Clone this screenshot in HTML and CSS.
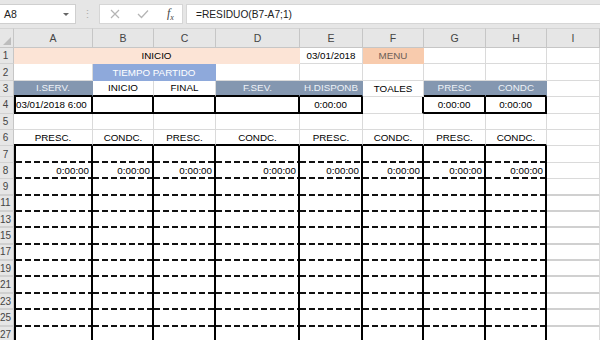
FILE: index.html
```html
<!DOCTYPE html>
<html>
<head>
<link rel="stylesheet" href="styles.css">
</head>
<body>

<div class="toolbar">
    <div class="namebox"><span>A8</span><span class="arrow"></span></div>
    <div class="grip">&#8942;</div>
    <div class="fxbox">
        <svg class="ico" width="10" height="10" viewBox="0 0 10 10"><path d="M1 1 L9 9 M9 1 L1 9" stroke="#b5b5b5" stroke-width="1.2" fill="none"/></svg>
        <svg class="ico" width="12" height="10" viewBox="0 0 12 10"><path d="M1 5 L4.5 8.5 L11 1.5" stroke="#b5b5b5" stroke-width="1.3" fill="none"/></svg>
        <span class="fx">f<sub>x</sub></span>
    </div>
    <div class="formula">=RESIDUO(B7-A7;1)</div>
</div>

<div class="sheet">
    <div class="corner"><span class="tri"></span></div>
    <div class="ch">A</div><div class="ch">B</div><div class="ch">C</div><div class="ch">D</div><div class="ch">E</div><div class="ch">F</div><div class="ch">G</div><div class="ch">H</div><div class="ch">I</div>

    <div class="rh">1</div>
    <div class="c ctr peach span4">INICIO</div>
    <div class="c ctr">03/01/2018</div>
    <div class="c ctr menu">MENU</div>
    <div class="c"></div><div class="c"></div><div class="c"></div>

    <div class="rh">2</div>
    <div class="c"></div>
    <div class="c ctr blue span2">TIEMPO PARTIDO</div>
    <div class="c"></div><div class="c"></div><div class="c"></div><div class="c"></div><div class="c"></div><div class="c"></div>

    <div class="rh">3</div>
    <div class="c ctr slate bb">I.SERV.</div>
    <div class="c ctr bb">INICIO</div>
    <div class="c ctr bb">FINAL</div>
    <div class="c ctr slate bb">F.SEV.</div>
    <div class="c ctr slate bb">H.DISPONB</div>
    <div class="c ctr">TOALES</div>
    <div class="c ctr slate bb">PRESC</div>
    <div class="c ctr slate bb">CONDC</div>
    <div class="c"></div>

    <div class="rh">4</div>
    <div class="c box first">03/01/2018 6:00</div>
    <div class="c box"></div>
    <div class="c box"></div>
    <div class="c box"></div>
    <div class="c box ctr">0:00:00</div>
    <div class="c br"></div>
    <div class="c box ctr">0:00:00</div>
    <div class="c box ctr">0:00:00</div>
    <div class="c"></div>

    <div class="rh">5</div>
    <div class="c"></div><div class="c"></div><div class="c"></div><div class="c"></div><div class="c"></div><div class="c"></div><div class="c"></div><div class="c"></div><div class="c"></div>

    <div class="rh">6</div>
    <div class="c ctr bb">PRESC.</div>
    <div class="c ctr bb">CONDC.</div>
    <div class="c ctr bb">PRESC.</div>
    <div class="c ctr bb">CONDC.</div>
    <div class="c ctr bb">PRESC.</div>
    <div class="c ctr bb">CONDC.</div>
    <div class="c ctr bb">PRESC.</div>
    <div class="c ctr bb">CONDC.</div>
    <div class="c"></div>

    <div class="rh">7</div>
    <div class="t first"></div><div class="t"></div><div class="t"></div><div class="t"></div><div class="t"></div><div class="t"></div><div class="t"></div><div class="t"></div>
    <div class="c"></div>

    <div class="rh">8</div>
    <div class="t first rt">0:00:00</div>
    <div class="t rt">0:00:00</div>
    <div class="t rt">0:00:00</div>
    <div class="t rt">0:00:00</div>
    <div class="t rt">0:00:00</div>
    <div class="t rt">0:00:00</div>
    <div class="t rt">0:00:00</div>
    <div class="t rt">0:00:00</div>
    <div class="c"></div>

    <div class="rh hid">9</div>
    <div class="t first"></div><div class="t"></div><div class="t"></div><div class="t"></div><div class="t"></div><div class="t"></div><div class="t"></div><div class="t"></div>
    <div class="c hid"></div>

    <div class="rh hid">11</div>
    <div class="t first"></div><div class="t"></div><div class="t"></div><div class="t"></div><div class="t"></div><div class="t"></div><div class="t"></div><div class="t"></div>
    <div class="c hid"></div>

    <div class="rh hid">13</div>
    <div class="t first"></div><div class="t"></div><div class="t"></div><div class="t"></div><div class="t"></div><div class="t"></div><div class="t"></div><div class="t"></div>
    <div class="c hid"></div>

    <div class="rh hid">15</div>
    <div class="t first"></div><div class="t"></div><div class="t"></div><div class="t"></div><div class="t"></div><div class="t"></div><div class="t"></div><div class="t"></div>
    <div class="c hid"></div>

    <div class="rh hid">17</div>
    <div class="t first"></div><div class="t"></div><div class="t"></div><div class="t"></div><div class="t"></div><div class="t"></div><div class="t"></div><div class="t"></div>
    <div class="c hid"></div>

    <div class="rh hid">19</div>
    <div class="t first"></div><div class="t"></div><div class="t"></div><div class="t"></div><div class="t"></div><div class="t"></div><div class="t"></div><div class="t"></div>
    <div class="c hid"></div>

    <div class="rh hid">21</div>
    <div class="t first"></div><div class="t"></div><div class="t"></div><div class="t"></div><div class="t"></div><div class="t"></div><div class="t"></div><div class="t"></div>
    <div class="c hid"></div>

    <div class="rh hid">23</div>
    <div class="t first"></div><div class="t"></div><div class="t"></div><div class="t"></div><div class="t"></div><div class="t"></div><div class="t"></div><div class="t"></div>
    <div class="c hid"></div>

    <div class="rh hid">25</div>
    <div class="t first"></div><div class="t"></div><div class="t"></div><div class="t"></div><div class="t"></div><div class="t"></div><div class="t"></div><div class="t"></div>
    <div class="c hid"></div>

    <div class="rh">27</div>
    <div class="t first"></div><div class="t"></div><div class="t"></div><div class="t"></div><div class="t"></div><div class="t"></div><div class="t"></div><div class="t"></div>
    <div class="c"></div>
</div>

</body>
</html>
```

FILE: styles.css
```css
body {
    margin: 0;
    width: 600px;
    height: 340px;
    overflow: hidden;
    background-color: white;
    font-family: "Liberation Sans", Arial, sans-serif;
}

.toolbar {
    height: 28px;
    background-color: #e6e6e6;
    display: flex;
    align-items: center;
}

.namebox {
    width: 76px;
    height: 20px;
    box-sizing: border-box;
    background-color: white;
    border: 1px solid #cfcfcf;
    border-left: none;
    display: flex;
    align-items: center;
    justify-content: space-between;
    padding: 0 6px 0 4px;
    font-size: 10.5px;
    color: #222;
}

.arrow {
    width: 0;
    height: 0;
    border-left: 3px solid transparent;
    border-right: 3px solid transparent;
    border-top: 3px solid #666;
}

.grip {
    width: 23px;
    text-align: center;
    font-size: 11px;
    color: #b0b0b0;
}

.fxbox {
    width: 84px;
    height: 20px;
    box-sizing: border-box;
    background-color: white;
    border: 1px solid #d6d6d6;
    display: flex;
    align-items: center;
    padding-left: 10px;
}

.fxbox .ico {
    margin-right: 17px;
}

.fx {
    font-family: "Liberation Serif", serif;
    font-style: italic;
    font-size: 12px;
    color: #444;
    margin-left: 1px;
}

.fx sub {
    font-size: 8px;
}

.formula {
    flex: 1;
    height: 20px;
    box-sizing: border-box;
    margin-left: 3px;
    background-color: white;
    border: 1px solid #d6d6d6;
    border-right: none;
    padding-left: 9px;
    display: flex;
    align-items: center;
    font-size: 10.2px;
    color: #222;
}

.sheet {
    display: grid;
    grid-template-columns: 14px 79px 61px 62px 84px 63px 61px 62px 61px 1fr;
    grid-template-rows: 20px repeat(18, 16.4px);
    font-size: 9.8px;
    color: #000;
}

.corner {
    background-color: #e6e6e6;
    border-right: 1px solid #c6c6c6;
    border-bottom: 1px solid #c6c6c6;
    border-top: 1px solid #d4d4d4;
    position: relative;
}

.tri {
    position: absolute;
    right: 2px;
    bottom: 2px;
    width: 0;
    height: 0;
    border-left: 8px solid transparent;
    border-bottom: 8px solid #bdbdbd;
}

.ch {
    background-color: #e6e6e6;
    border-right: 1px solid #c6c6c6;
    border-bottom: 1px solid #c6c6c6;
    border-top: 1px solid #d4d4d4;
    display: flex;
    align-items: center;
    justify-content: center;
    font-size: 10.5px;
    color: #444;
}

.rh {
    background-color: #e6e6e6;
    border-right: 1px solid #c6c6c6;
    border-bottom: 1px solid #d2d2d2;
    box-sizing: border-box;
    display: flex;
    align-items: center;
    justify-content: center;
    padding-right: 2px;
    overflow: hidden;
    font-size: 10px;
    color: #444;
}

.rh.hid, .c.hid {
    border-bottom: 2px solid #d0d0d0;
}

.c, .t {
    box-sizing: border-box;
    display: flex;
    align-items: center;
    white-space: nowrap;
    overflow: hidden;
    padding: 0 2px;
}

.c {
    border-right: 1px solid #dadada;
    border-bottom: 1px solid #dadada;
}

.ctr {
    justify-content: center;
}

.rt {
    justify-content: flex-end;
}

.span4 {
    grid-column: span 4;
}

.span2 {
    grid-column: span 2;
}

.peach {
    background-color: #fce4d6;
    border-color: #fce4d6;
}

.menu {
    background-color: #f8cbad;
    border-color: #f8cbad;
    color: #6b5e57;
}

.blue {
    background-color: #8ea9db;
    border-color: #8ea9db;
    color: white;
}

.slate {
    background-color: #8497b0;
    border-right-color: #8497b0;
    color: #eef2f7;
}

.bb {
    border-bottom: 2px solid #000;
}

.br {
    border-right: 2px solid #000;
}

.box {
    border-right: 2px solid #000;
    border-bottom: 2px solid #000;
}

.box.first {
    padding: 0;
}

.first {
    border-left: 2px solid #000;
}

.t {
    border-right: 2px solid #000;
    background-image: repeating-linear-gradient(90deg, #111 0 6px, transparent 6px 9px);
    background-size: 100% 2px;
    background-position: 0 100%;
    background-repeat: no-repeat;
}
```
